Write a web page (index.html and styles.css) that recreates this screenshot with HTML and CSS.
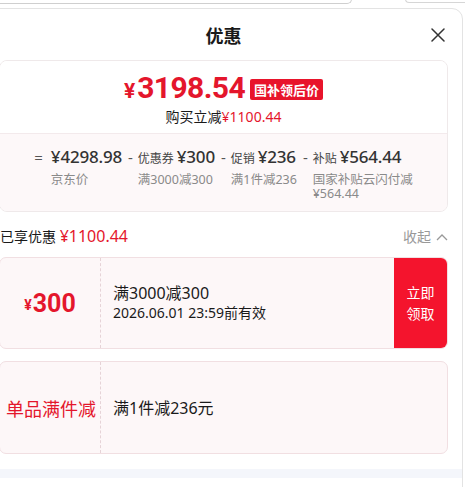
FILE: index.html
```html
<!DOCTYPE html>
<html lang="zh-CN">
<head>
<meta charset="utf-8">
<title>优惠</title>
<link rel="stylesheet" href="styles.css">
</head>
<body>
<div class="page-top">
  <div class="pt-left"></div>
  <div class="pt-right"></div>
</div>
<div class="modal">
  <div class="head">
    <span></span>
    <span class="title">优惠</span>
    <button class="close" aria-label="关闭">
      <svg width="14" height="14" viewBox="0 0 14 14"><path d="M1 1L13 13M13 1L1 13" stroke="#333" stroke-width="1.5" fill="none" stroke-linecap="round"/></svg>
    </button>
  </div>

  <div class="sum">
    <div class="sum-top">
      <div class="price-line"><span class="yen">¥</span><span class="num">3198.54</span><span class="badge">国补领后价</span></div>
      <div class="sub">购买立减<span class="red">¥1100.44</span></div>
    </div>
    <div class="sum-bot">
      <div class="item">
        <span class="op">=</span>
        <div class="col">
          <div class="vline"><span class="val">¥4298.98</span></div>
          <div class="desc">京东价</div>
        </div>
      </div>
      <div class="item">
        <span class="op">-</span>
        <div class="col">
          <div class="vline"><span class="lab">优惠券</span><span class="val">¥300</span></div>
          <div class="desc">满3000减300</div>
        </div>
      </div>
      <div class="item">
        <span class="op">-</span>
        <div class="col">
          <div class="vline"><span class="lab">促销</span><span class="val">¥236</span></div>
          <div class="desc">满1件减236</div>
        </div>
      </div>
      <div class="item">
        <span class="op">-</span>
        <div class="col">
          <div class="vline"><span class="lab">补贴</span><span class="val">¥564.44</span></div>
          <div class="desc narrow">国家补贴云闪付减¥564.44</div>
        </div>
      </div>
    </div>
  </div>

  <div class="enjoy">
    <div class="enjoy-l">已享优惠 <span class="red-lg">¥1100.44</span></div>
    <div class="fold">收起<svg width="12" height="8" viewBox="0 0 12 8"><path d="M1 7L6 2L11 7" stroke="#999" stroke-width="1.3" fill="none"/></svg></div>
  </div>

  <div class="coupon">
    <div class="c-left"><span class="c-yen">¥</span><span class="c-num">300</span></div>
    <div class="c-mid">
      <div class="c-title">满3000减300</div>
      <div class="c-date">2026.06.01 23:59前有效</div>
    </div>
    <button class="c-btn">立即<br>领取</button>
  </div>

  <div class="coupon">
    <div class="c-left"><span class="c-type">单品满件减</span></div>
    <div class="c-mid">
      <div class="c-title">满1件减236元</div>
    </div>
  </div>

  <div class="strip"></div>
</div>
</body>
</html>
```

FILE: styles.css
```css
* { box-sizing: border-box; margin: 0; padding: 0; }
html, body { background: #fff; }
body {
  width: 467px;
  height: 487px;
  overflow: hidden;
  font-family: "Noto Sans", "Noto Sans CJK SC", sans-serif;
  color: #1a1a1a;
}

.page-top {
  display: flex;
  height: 4px;
  margin-left: -20px;
}
.pt-left {
  width: 372px;
  height: 5px;
  margin-top: -1px;
  border-bottom: 1px solid #cfcfcf;
  border-right: 1px solid #cfcfcf;
  border-bottom-right-radius: 10px;
}
.pt-right {
  width: 60px;
  height: 4px;
  margin-left: 53px;
  margin-top: -1px;
  border-left: 1px solid #d6d6d6;
  border-bottom: 1px solid #d6d6d6;
  border-bottom-left-radius: 10px;
}

.modal {
  margin-top: 4px;
  margin-left: -16px;
  width: 479px;
  height: 500px;
  border: 1px solid #e3e3e3;
  border-radius: 11px 11px 0 0;
  padding: 0 14px;
  background: #fff;
}

.head {
  height: 51px;
  display: grid;
  grid-template-columns: 1fr auto 1fr;
  align-items: center;
}
.title {
  font-size: 18px;
  font-weight: 700;
  color: #1a1a1a;
  line-height: 24px;
  font-family: "Noto Sans CJK SC", sans-serif;
  padding-top: 1px;
}
.close {
  justify-self: end;
  width: 20px;
  height: 20px;
  border: 0;
  background: none;
  display: flex;
  align-items: center;
  justify-content: center;
  margin-top: 1px;
}

.sum {
  border: 1px solid #efe9ea;
  border-radius: 8px;
  overflow: hidden;
}
.sum-top {
  padding: 11px 0 6px;
  display: flex;
  flex-direction: column;
  align-items: center;
  background: #fff;
}
.price-line {
  display: flex;
  align-items: center;
  height: 32px;
  color: #e4162c;
}
.yen {
  font-family: "Roboto", sans-serif;
  font-weight: 700;
  font-size: 21px;
  margin-right: 2px;
  margin-top: 5px;
}
.num {
  font-family: "Roboto", sans-serif;
  font-weight: 700;
  font-size: 30px;
  letter-spacing: -0.6px;
  line-height: 32px;
}
.badge {
  margin-left: 5px;
  margin-top: 2px;
  background: #e8142b;
  color: #fff;
  font-size: 13px;
  font-weight: 700;
  line-height: 21px;
  height: 21px;
  padding: 0 4px;
  border-radius: 2px;
  font-family: "Noto Sans CJK SC", sans-serif;
}
.sub {
  margin-top: 3px;
  font-size: 14px;
  line-height: 20px;
  color: #1a1a1a;
}
.red { color: #e4162c; }

.sum-bot {
  border-top: 1px solid #f3eaec;
  background: #fdf8f9;
  padding: 11px 0 10px;
  display: flex;
  justify-content: center;
  gap: 6px;
}
.item {
  display: flex;
  align-items: flex-start;
  gap: 5px;
}
.item:first-child { gap: 8px; }
.op {
  font-size: 15px;
  line-height: 24px;
  color: #555;
}
.vline {
  display: flex;
  align-items: baseline;
  line-height: 24px;
  height: 24px;
}
.lab {
  font-size: 12px;
  color: #444;
  margin-right: 3px;
}
.val {
  font-size: 17px;
  font-weight: 500;
  color: #333;
  letter-spacing: -0.2px;
}
.desc {
  margin-top: 4px;
  font-size: 12.5px;
  line-height: 14px;
  color: #8a8a8a;
}
.desc.narrow { width: 100px; }

.enjoy {
  display: flex;
  justify-content: space-between;
  align-items: center;
  padding: 13px 0 9px 1px;
  line-height: 22px;
}
.enjoy-l {
  font-size: 14px;
  color: #1a1a1a;
}
.red-lg {
  font-size: 16px;
  color: #e4162c;
}
.fold {
  display: flex;
  align-items: center;
  gap: 5px;
  font-size: 14px;
  color: #999;
}

.coupon {
  display: flex;
  height: 92px;
  margin-bottom: 12px;
  background: #fdf7f8;
  border: 1px solid #f1dfe2;
  border-radius: 7px;
  overflow: hidden;
}
.coupon + .coupon { height: 93px; margin-bottom: 0; }
.c-left {
  width: 101px;
  flex: none;
  border-right: 1px dashed #e6d3d7;
  display: flex;
  align-items: center;
  justify-content: center;
  color: #e4162c;
}
.c-yen {
  font-family: "Roboto", sans-serif;
  font-weight: 700;
  font-size: 14px;
  margin-top: 4px;
}
.c-num {
  font-family: "Roboto", sans-serif;
  font-weight: 700;
  font-size: 25px;
  margin-left: 1px;
}
.c-type {
  font-size: 18px;
  color: #e4162c;
  margin-left: 2px;
}
.c-mid {
  flex: 1;
  padding-left: 12px;
  display: flex;
  flex-direction: column;
  justify-content: center;
}
.c-title {
  font-size: 16px;
  line-height: 20px;
  color: #1a1a1a;
}
.c-date {
  font-size: 14px;
  line-height: 20px;
  color: #1a1a1a;
}
.c-btn {
  width: 53px;
  flex: none;
  border: 0;
  background: #f4142d;
  color: #fff;
  font-family: "Noto Sans CJK SC", sans-serif;
  font-size: 14px;
  line-height: 21px;
}

.strip {
  margin: 15px -14px 0;
  height: 9px;
  background: #f4f6fb;
}
```
